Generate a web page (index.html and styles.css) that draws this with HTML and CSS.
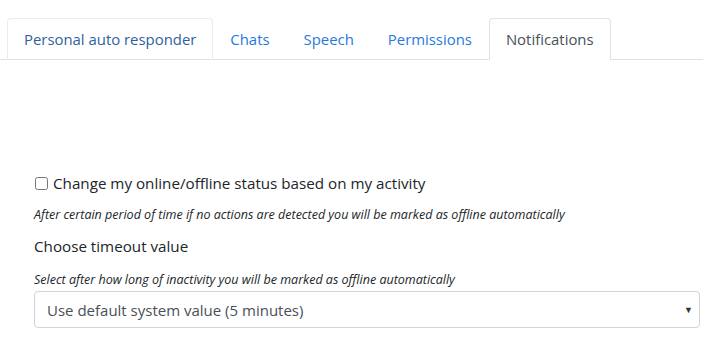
FILE: index.html
```html
<html>
    <head>
        <link rel="stylesheet" href="styles.css">
    </head>
    <body>
        <div class="container">
            <ul class="tabs">
                <li><a href="#">Personal auto responder</a></li>
                <li><a href="#">Chats</a></li>
                <li><a href="#">Speech</a></li>
                <li><a href="#">Permissions</a></li>
                <li><a href="#" class="active">Notifications</a></li>
            </ul>
            <div class="pane">
                <label class="check">
                    <input type="checkbox" name="auto_status">
                    Change my online/offline status based on my activity
                </label>
                <p class="hint">After certain period of time if no actions are detected you will be marked as offline automatically</p>
                <label class="field-label">Choose timeout value</label>
                <p class="hint">Select after how long of inactivity you will be marked as offline automatically</p>
                <div class="select">
                    <span>Use default system value (5 minutes)</span>
                    <span class="caret">&#9660;</span>
                </div>
            </div>
        </div>
    </body>
</html>
```

FILE: styles.css
```css
* {
    margin: 0;
    padding: 0;
    box-sizing: border-box;
}

body {
    font-family: "Open Sans", "Noto Sans", sans-serif;
    font-size: 15px;
    color: #212529;
    background: #fff;
}

.container {
    width: 703px;
}

.tabs {
    list-style: none;
    display: flex;
    padding: 18px 0 0 7px;
    border-bottom: 1px solid #dee2e6;
    font-size: 14.9px;
}

.tabs li {
    margin-bottom: -1px;
}

.tabs a {
    display: block;
    padding: 8px 16px 8px 16px;
    line-height: 24px;
    border: 1px solid transparent;
    border-radius: 4px 4px 0 0;
    color: #1f7ae0;
    text-decoration: none;
}

.tabs a.active {
    color: #495057;
    background: #fff;
    border-color: #dee2e6 #dee2e6 #fff;
}

.tabs li:first-child a {
    color: #2f5f9e;
    border-color: #e9ecef #e9ecef #dee2e6;
}

.pane {
    padding: 111px 0 0 34px;
}

.check {
    display: flex;
    align-items: center;
    font-size: 15.2px;
    line-height: 24px;
}

.check input {
    width: 13px;
    height: 13px;
    margin: 0 5px 0 1px;
}

.hint {
    font-size: 12.5px;
    font-style: italic;
    line-height: 18px;
    color: #212529;
}

.check + .hint {
    margin-top: 11px;
}

.field-label + .hint {
    margin-top: 13px;
}

.field-label {
    display: block;
    font-size: 15.2px;
    line-height: 24px;
    margin-top: 10px;
}

.select {
    display: flex;
    justify-content: space-between;
    align-items: center;
    width: 666px;
    height: 37px;
    margin-top: 2px;
    padding: 0 6px 0 12px;
    border: 1px solid #ced4da;
    border-radius: 4px;
    font-size: 15px;
    color: #495057;
}

.select .caret {
    font-size: 9px;
    color: #333;
}
```
